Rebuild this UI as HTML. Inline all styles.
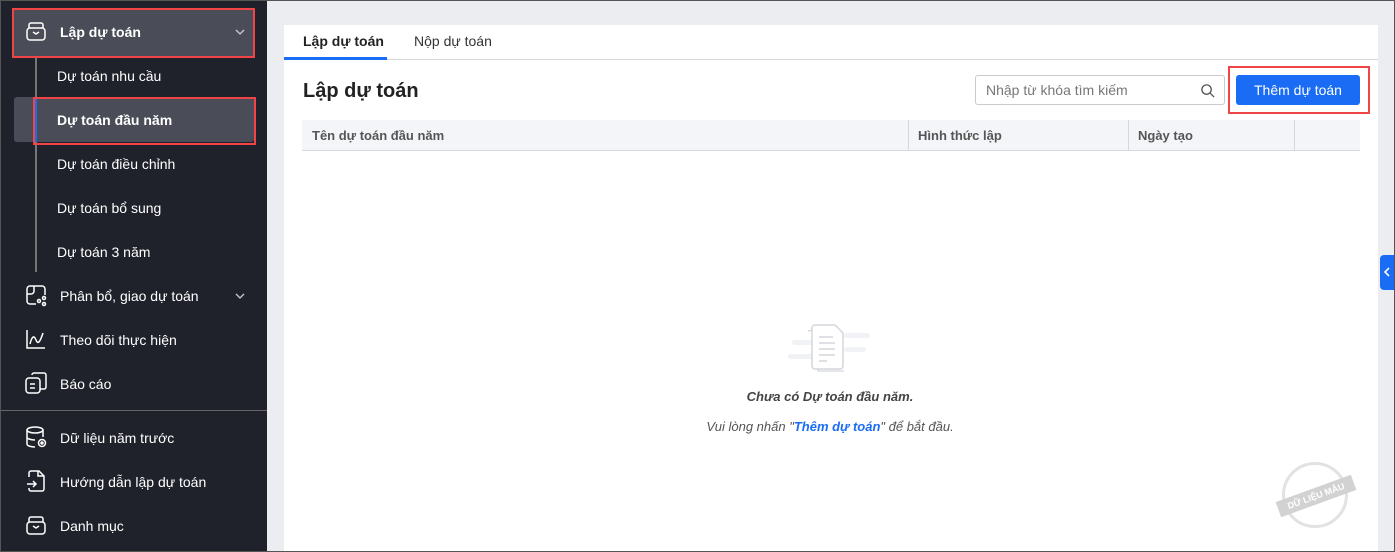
<!DOCTYPE html>
<html><head><meta charset="utf-8"><style>
*{box-sizing:border-box;margin:0;padding:0}
body{width:1395px;height:552px;overflow:hidden;font-family:"Liberation Sans",sans-serif;background:#ebedf0;position:relative}
.frame{position:absolute;inset:0;border:1px solid #555;pointer-events:none;z-index:10}
.side{position:absolute;left:0;top:0;width:267px;height:552px;background:#1f222b;color:#fff}
.it{position:absolute;left:0;width:267px;font-size:14px;color:#fff;height:20px;line-height:20px}
.it svg{position:absolute;left:24px;top:-3px}
.it span{position:absolute;left:60px}
.sub{position:absolute;left:57px;font-size:14px;color:#fff;line-height:20px}
.abs{position:absolute}
.main .th{position:absolute;top:120px;height:31px;line-height:31px;font-size:13px;font-weight:bold;color:#555;}
</style></head><body>
<div class="side">
 <div class="abs" style="left:12px;top:8px;width:243px;height:50px;background:#4a4d57;border:2px solid #f04446"></div>
 <div class="abs" style="left:35px;top:58px;width:2px;height:214px;background:#777"></div>
 <div class="abs" style="left:14px;top:97px;width:240px;height:45px;background:#4a4d57;border-radius:3px"></div>
 <div class="abs" style="left:33px;top:97px;width:223px;height:48px;border:2px solid #f04446"></div>
 <div class="abs" style="left:35px;top:99px;width:2px;height:43px;background:#1a6cf5"></div>
 <div class="it" style="top:22px"><svg width="24" height="24" viewBox="0 0 24 24" fill="none" stroke="#fff" stroke-width="1.5"><rect x="3" y="9" width="18" height="12" rx="3"/><path d="M5 9V6a2 2 0 0 1 2-2h10a2 2 0 0 1 2 2v3M9 13l3 2 3-2"/></svg><span style="font-weight:bold">Lập dự toán</span><svg style="left:234px;top:4px" width="12" height="12" viewBox="0 0 12 12" fill="none" stroke="#ccc" stroke-width="1.3"><path d="M2 4l4 4 4-4"/></svg></div>
 <div class="sub" style="top:66px">Dự toán nhu cầu</div>
 <div class="sub" style="top:110px;font-weight:bold">Dự toán đầu năm</div>
 <div class="sub" style="top:154px">Dự toán điều chỉnh</div>
 <div class="sub" style="top:198px">Dự toán bổ sung</div>
 <div class="sub" style="top:242px">Dự toán 3 năm</div>
 <div class="it" style="top:286px"><svg width="24" height="24" viewBox="0 0 24 24" fill="none" stroke="#fff" stroke-width="1.5"><path d="M12 21H6a3 3 0 0 1-3-3V6a3 3 0 0 1 3-3h12a3 3 0 0 1 3 3v6M3 11h4a3 3 0 0 0 3-3V3"/><circle cx="15" cy="18" r="1.5"/><circle cx="20" cy="15" r="1.5"/><circle cx="20" cy="21" r="1.5"/></svg><span>Phân bổ, giao dự toán</span><svg style="left:234px;top:4px" width="12" height="12" viewBox="0 0 12 12" fill="none" stroke="#ccc" stroke-width="1.3"><path d="M2 4l4 4 4-4"/></svg></div>
 <div class="it" style="top:330px"><svg width="24" height="24" viewBox="0 0 24 24" fill="none" stroke="#fff" stroke-width="1.5"><path d="M3 3v18h18M6 17c2-8 4-9 6-4s4 2 7-7"/></svg><span>Theo dõi thực hiện</span></div>
 <div class="it" style="top:374px"><svg width="24" height="24" viewBox="0 0 24 24" fill="none" stroke="#fff" stroke-width="1.5"><rect x="2" y="7" width="14" height="15" rx="3"/><path d="M8 4a2 2 0 0 1 2-2h10a2 2 0 0 1 2 2v12a2 2 0 0 1-2 2h-4M6 13h5M6 17h5"/></svg><span>Báo cáo</span></div>
 <div class="abs" style="left:0;top:410px;width:267px;height:1px;background:#666"></div>
 <div class="it" style="top:428px"><svg width="24" height="24" viewBox="0 0 24 24" fill="none" stroke="#fff" stroke-width="1.5"><ellipse cx="11" cy="5" rx="8" ry="3"/><path d="M3 5v14c0 1.7 3.6 3 8 3M19 5v7M3 12c0 1.7 3.6 3 8 3"/><circle cx="18" cy="18" r="3.5"/><circle cx="18" cy="18" r="1" fill="#fff"/></svg><span>Dữ liệu năm trước</span></div>
 <div class="it" style="top:472px"><svg width="24" height="24" viewBox="0 0 24 24" fill="none" stroke="#fff" stroke-width="1.5"><path d="M5 8V4a2 2 0 0 1 2-2h8l5 5v13a2 2 0 0 1-2 2H7a2 2 0 0 1-2-2v-1M14 2v5h6M3 15h9M9 12l3 3-3 3"/></svg><span>Hướng dẫn lập dự toán</span></div>
 <div class="it" style="top:516px"><svg width="24" height="24" viewBox="0 0 24 24" fill="none" stroke="#fff" stroke-width="1.5"><rect x="3" y="9" width="18" height="12" rx="3"/><path d="M5 9V6a2 2 0 0 1 2-2h10a2 2 0 0 1 2 2v3M9 13l3 2 3-2"/></svg><span>Danh mục</span></div>
</div>
<div class="main">
 <div class="abs" style="left:284px;top:25px;width:1094px;height:527px;background:#fff"></div>
 <div class="abs" style="left:284px;top:59px;width:1094px;height:1px;background:#d5d7dc"></div>
 <div class="abs" style="left:284px;top:57px;width:103px;height:3px;background:#1a6cf5"></div>
 <div class="abs" style="left:303px;top:33px;font-size:14px;font-weight:bold;color:#222">Lập dự toán</div>
 <div class="abs" style="left:414px;top:33px;font-size:14px;color:#333">Nộp dự toán</div>
 <div class="abs" style="left:303px;top:80px;font-size:20px;font-weight:bold;color:#222">Lập dự toán</div>
 <div class="abs" style="left:975px;top:75px;width:250px;height:30px;border:1px solid #c8cad0;border-radius:3px;font-size:14px;color:#777;padding:6px 10px">Nhập từ khóa tìm kiếm
  <svg class="abs" style="right:9px;top:7px" width="15" height="15" viewBox="0 0 16 16" fill="none" stroke="#555" stroke-width="1.4"><circle cx="7" cy="7" r="5"/><path d="M11 11l4 4"/></svg></div>
 <div class="abs" style="left:1228px;top:66px;width:142px;height:48px;border:2px solid #f04446"></div>
 <div class="abs" style="left:1236px;top:75px;width:124px;height:30px;background:#1a6cf5;border-radius:3px;color:#fff;font-size:14px;text-align:center;line-height:30px">Thêm dự toán</div>
 <div class="abs" style="left:302px;top:120px;width:1058px;height:31px;background:#f4f5f8;border-bottom:1px solid #d5d7dc"></div>
 <div class="abs" style="left:908px;top:120px;width:1px;height:31px;background:#d5d7dc"></div>
 <div class="abs" style="left:1128px;top:120px;width:1px;height:31px;background:#d5d7dc"></div>
 <div class="abs" style="left:1294px;top:120px;width:1px;height:31px;background:#d5d7dc"></div>
 <div class="th" style="left:312px">Tên dự toán đầu năm</div>
 <div class="th" style="left:918px">Hình thức lập</div>
 <div class="th" style="left:1138px">Ngày tạo</div>
 <svg class="abs" style="left:788px;top:323px" width="84" height="56" viewBox="0 0 84 56" fill="none">
  <rect x="4" y="17" width="34" height="5" rx="2.5" fill="#f1f2f6"/><rect x="0" y="31" width="40" height="5" rx="2.5" fill="#f1f2f6"/>
  <rect x="56" y="10" width="26" height="5" rx="2.5" fill="#f1f2f6"/><rect x="56" y="24" width="22" height="5" rx="2.5" fill="#f1f2f6"/>
  <path d="M20 8l4-1 6 41h26" stroke="#d4d6dc" stroke-width="1.3" fill="#fff"/>
  <path d="M24 5a3 3 0 0 1 3-3h20l8 8v33a3 3 0 0 1-3 3H27a3 3 0 0 1-3-3z" stroke="#d4d6dc" stroke-width="1.5" fill="#fff"/>
  <path d="M31 14h14M31 20h16M31 26h16M31 32h16M31 38h8" stroke="#d4d6dc" stroke-width="1.5"/>
 </svg>
 <div class="abs" style="left:600px;width:460px;text-align:center;top:389px;font-size:13px;font-style:italic;font-weight:bold;color:#444">Chưa có Dự toán đầu năm.</div>
 <div class="abs" style="left:600px;width:460px;text-align:center;top:419px;font-size:13px;font-style:italic;color:#555">Vui lòng nhấn "<b style="color:#1a6cf5">Thêm dự toán</b>" để bắt đầu.</div>
 <div class="abs" style="left:1282px;top:462px;width:66px;height:66px;border:3px solid #e2e2e2;border-radius:50%"></div>
 <div class="abs" style="left:1276px;top:488px;width:80px;height:16px;background:#d2d2d2;color:#fff;font-size:9px;font-weight:bold;text-align:center;line-height:16px;transform:rotate(-20deg)">DỮ LIỆU MẪU</div>
 <div class="abs" style="left:1380px;top:255px;width:14px;height:35px;background:#1a6cf5;border-radius:4px 0 0 4px"></div>
 <svg class="abs" style="left:1383px;top:267px" width="8" height="10" viewBox="0 0 8 10" fill="none" stroke="#fff" stroke-width="1.6"><path d="M6 1L2 5l4 4"/></svg>
</div>
<div class="frame"></div>
</body></html>
